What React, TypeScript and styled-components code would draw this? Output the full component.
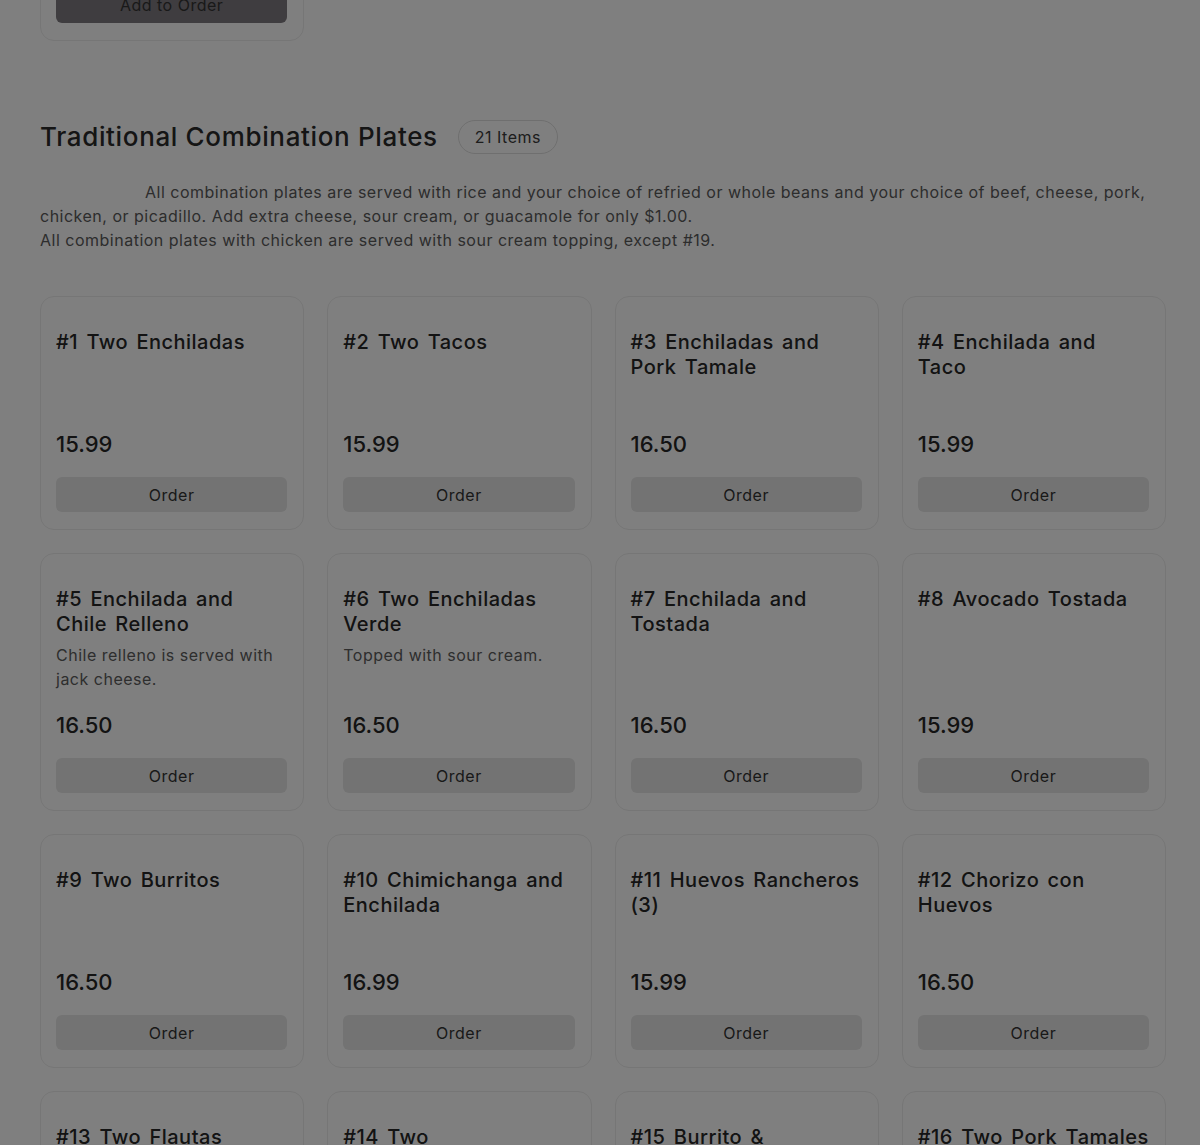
import React from 'react';
import styled, { createGlobalStyle } from 'styled-components';

const GlobalStyle = createGlobalStyle`
  html, body {
    margin: 0;
    padding: 0;
    background: #ffffff;
  }

  body {
    font-family: Inter, 'Noto Sans', sans-serif;
    letter-spacing: 0.5px;
    color: #2a2a2a;
  }
`;

const Page = styled.div`
  width: 1126px;
  padding: 0 34px 40px 40px;
  overflow: hidden;
`;

// dimmed backdrop behind an open modal
const Backdrop = styled.div`
  position: fixed;
  inset: 0;
  background: rgba(0, 0, 0, 0.5);
  z-index: 10;
`;

const PrevSection = styled.section`
  margin-top: -213px;
`;

const Section = styled.section`
  margin-top: 79px;
`;

const HeaderRow = styled.div`
  display: flex;
  align-items: center;
  gap: 20px;
`;

const SectionTitle = styled.h2`
  margin: 0;
  font-size: 26px;
  font-weight: 500;
  line-height: 34px;
  letter-spacing: 0.65px;
  color: #2b2b2b;
`;

const CountBadge = styled.span`
  display: inline-flex;
  align-items: center;
  height: 34px;
  box-sizing: border-box;
  padding: 0 16px;
  border: 1px solid #dedede;
  border-radius: 999px;
  font-size: 16px;
  color: #3a3a3a;
`;

const SectionNote = styled.p`
  margin: 26px 0 0;
  font-size: 16px;
  line-height: 24px;
  color: #5a5a5a;
  text-indent: 105px;
`;

const Grid = styled.div`
  display: grid;
  grid-template-columns: repeat(4, 1fr);
  gap: 23px;
  margin-top: 44px;
`;

const Card = styled.article`
  display: flex;
  flex-direction: column;
  border: 1px solid #ececec;
  border-radius: 14px;
  padding: 16px 16px 17px 15px;
  background: #ffffff;
`;

const ItemName = styled.h3`
  margin: 17px 0 0;
  font-size: 20px;
  font-weight: 500;
  line-height: 25px;
  word-spacing: 2.5px;
  color: #262626;
`;

const ItemDesc = styled.p`
  margin: 6px 0 21px;
  min-height: 24px;
  font-size: 16px;
  line-height: 24px;
  color: #5c5c5c;
`;

const Price = styled.div`
  margin-top: auto;
  font-size: 22px;
  font-weight: 500;
  line-height: 26px;
  letter-spacing: 0;
  color: #262626;
`;

const OrderButton = styled.button<{ $dark?: boolean }>`
  margin-top: 20px;
  height: ${(p) => (p.$dark ? '36px' : '35px')};
  width: 100%;
  border: none;
  border-radius: 6px;
  background: ${(p) => (p.$dark ? '#7e7a80' : '#e6e6e6')};
  font-family: inherit;
  font-size: 16px;
  letter-spacing: 0.5px;
  color: #333333;
  cursor: pointer;
`;

type Item = { name: string; price: string; desc?: string };

const items: Item[] = [
  { name: '#1 Two Enchiladas', price: '15.99' },
  { name: '#2 Two Tacos', price: '15.99' },
  { name: '#3 Enchiladas and Pork Tamale', price: '16.50' },
  { name: '#4 Enchilada and Taco', price: '15.99' },
  {
    name: '#5 Enchilada and Chile Relleno',
    price: '16.50',
    desc: 'Chile relleno is served with jack cheese.',
  },
  {
    name: '#6 Two Enchiladas Verde',
    price: '16.50',
    desc: 'Topped with sour cream.',
  },
  { name: '#7 Enchilada and Tostada', price: '16.50' },
  { name: '#8 Avocado Tostada', price: '15.99' },
  { name: '#9 Two Burritos', price: '16.50' },
  { name: '#10 Chimichanga and Enchilada', price: '16.99' },
  { name: '#11 Huevos Rancheros (3)', price: '15.99' },
  { name: '#12 Chorizo con Huevos', price: '16.50' },
  { name: '#13 Two Flautas', price: '15.99' },
  { name: '#14 Two Chiles\u00a0Rellenos', price: '16.50' },
  { name: '#15 Burrito & Enchilada', price: '16.50' },
  { name: '#16 Two Pork Tamales', price: '15.99' },
  { name: '#17 Taco and Tostada', price: '15.99' },
  { name: '#18 Tamale and Taco', price: '15.99' },
  { name: '#19 Chicken Enchiladas', price: '16.50' },
  { name: '#20 Two Tostadas', price: '15.99' },
  { name: '#21 Burrito and Taco', price: '16.50' },
];

function MenuCard({ item }: { item: Item }) {
  return (
    <Card>
      <ItemName>{item.name}</ItemName>
      <ItemDesc>{item.desc}</ItemDesc>
      <Price>{item.price}</Price>
      <OrderButton>Order</OrderButton>
    </Card>
  );
}

export default function App() {
  return (
    <>
      <GlobalStyle />
      <Page>
        <PrevSection>
          <Grid>
            <Card>
              <ItemName>Chips and Salsa</ItemName>
              <ItemDesc />
              <Price>4.99</Price>
              <OrderButton $dark>Add to Order</OrderButton>
            </Card>
          </Grid>
        </PrevSection>

        <Section>
          <HeaderRow>
            <SectionTitle>Traditional Combination Plates</SectionTitle>
            <CountBadge>{items.length} Items</CountBadge>
          </HeaderRow>
          <SectionNote>
            All combination plates are served with rice and your choice of
            refried or whole beans and your choice of beef, cheese, pork,
            chicken, or picadillo. Add extra cheese, sour cream, or guacamole
            for only $1.00.
            <br />
            All combination plates with chicken are served with sour cream
            topping, except #19.
          </SectionNote>
          <Grid>
            {items.map((item, idx) => (
              <MenuCard key={idx} item={item} />
            ))}
          </Grid>
        </Section>
      </Page>
      <Backdrop />
    </>
  );
}
